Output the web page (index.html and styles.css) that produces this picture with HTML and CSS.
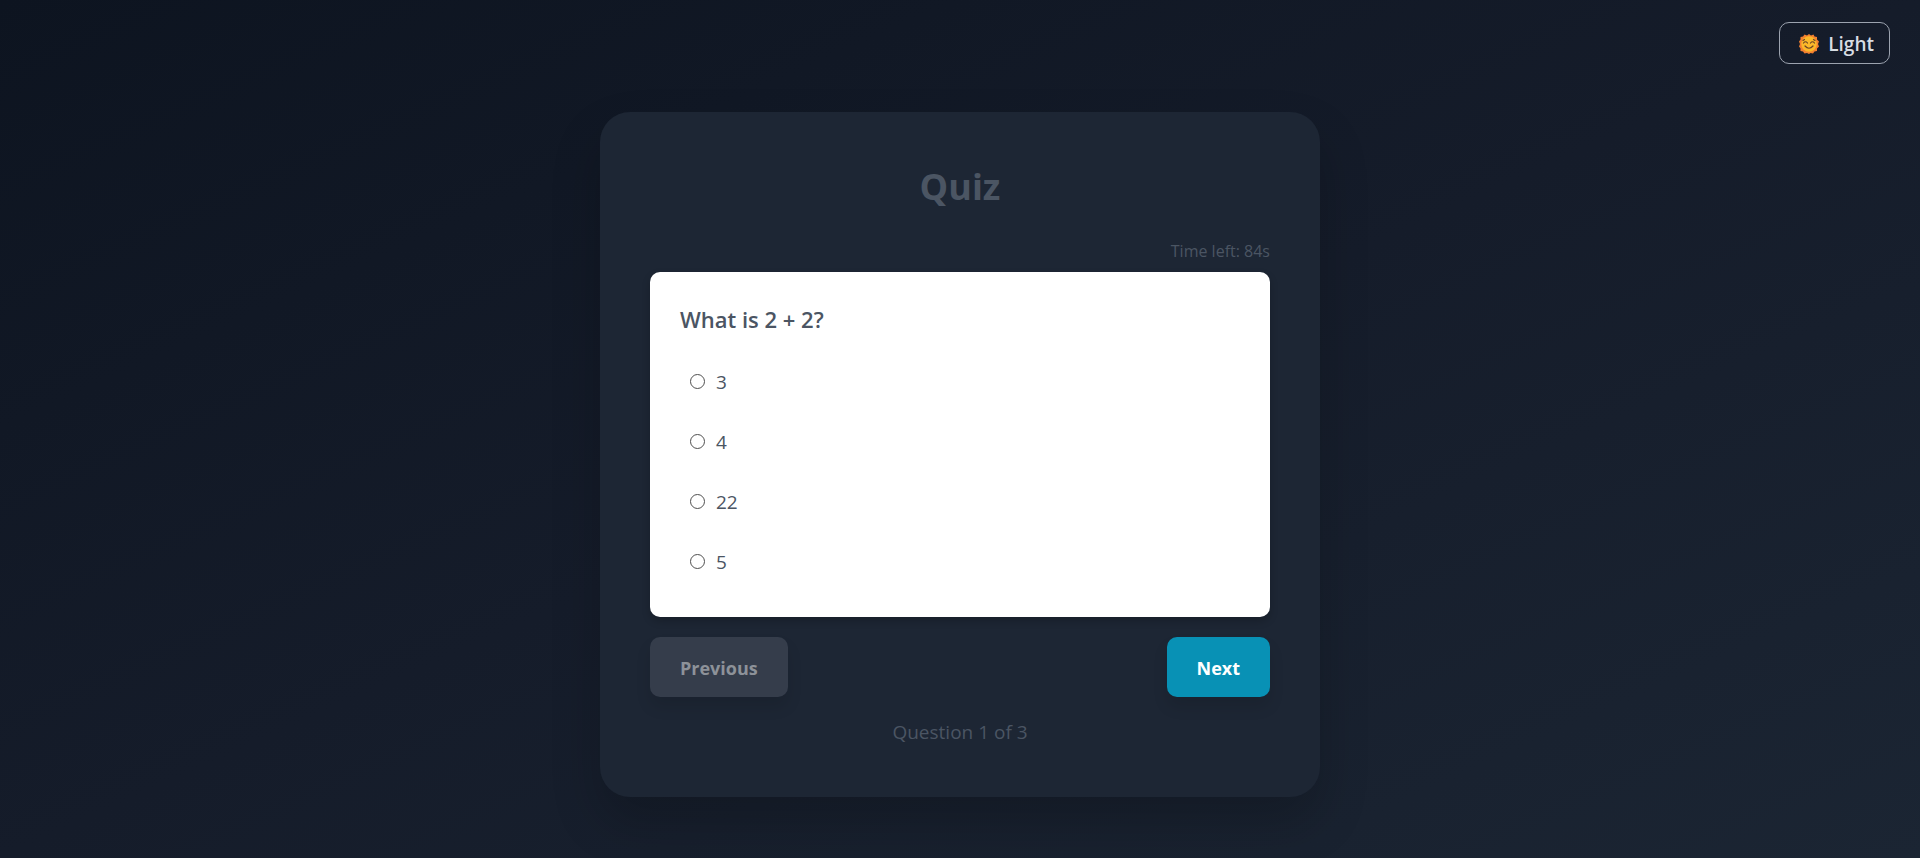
FILE: index.html
```html
<!DOCTYPE html>
<html lang="en">
<head>
<meta charset="utf-8">
<meta name="viewport" content="width=device-width, initial-scale=1">
<title>Quiz</title>
<link rel="stylesheet" href="styles.css">
</head>
<body class="page">
<header class="topbar">
  <button class="theme-toggle" type="button">
    <svg class="sun" viewBox="0 0 40 40" aria-hidden="true">
      <path fill="#f4802f" d="M20 0l4 3 5-2 2 4 5 1v5l4 4-2 5 2 5-4 4v5l-5 1-3 4-5-1-3 2-4-2-5 1-3-4-5-1v-5l-3-4 2-5-2-5 3-4V6l5-1 3-4 5 2z"/>
      <circle cx="20" cy="20" r="15.500" fill="#fbb829"/>
      <path fill="none" stroke="#6b4526" stroke-width="2.400" stroke-linecap="round" d="M8 13l3-2M32 13l-3-2M9 18q4-5 8 0M23 18q4-5 8 0M12 24q8 9 16 0"/>
    </svg>
    <span>Light</span>
  </button>
</header>
<main class="card">
  <h1 class="title">Quiz</h1>
  <p class="timer">Time left: 84s</p>
  <form class="quiz">
    <fieldset class="question">
      <legend class="prompt">What is 2 + 2?</legend>
      <label class="option"><input class="radio" type="radio" name="answer" value="3"><span>3</span></label>
      <label class="option"><input class="radio" type="radio" name="answer" value="4"><span>4</span></label>
      <label class="option"><input class="radio" type="radio" name="answer" value="22"><span>22</span></label>
      <label class="option"><input class="radio" type="radio" name="answer" value="5"><span>5</span></label>
    </fieldset>
    <div class="actions">
      <button class="button previous" type="button" disabled>Previous</button>
      <button class="button next" type="button">Next</button>
    </div>
  </form>
  <p class="progress">Question 1 of 3</p>
</main>
</body>
</html>
```
FILE: styles.css
```css
* {
  box-sizing: border-box;
}

.page {
  margin: 0;
  min-height: 100vh;
  padding: 22px 30px 60px;
  background: linear-gradient(to bottom right, #0d1420, #151c2a 50%, #1b2533);
  color: #4b5563;
  font-family: "Segoe UI", "Open Sans", "Noto Sans", sans-serif;
  font-size: 19px;
  line-height: 30px;
}

.topbar {
  display: flex;
  justify-content: flex-end;
  margin-bottom: 48px;
}

.theme-toggle {
  display: flex;
  align-items: center;
  gap: 9px;
  padding: 6px 15px 4px 19px;
  border: 1px solid #9ca3af;
  border-radius: 10px;
  background: transparent;
  color: #d8dde4;
  font: inherit;
  font-weight: 600;
}

.sun {
  width: 20px;
  height: 20px;
}

.card {
  width: 100%;
  max-width: 720px;
  margin: 0 auto;
  padding: 50px;
  border-radius: 30px;
  background: #1d2634;
  box-shadow: 0 25px 50px rgba(0, 0, 0, 0.2);
}

.title {
  margin: 0 0 27px;
  font-size: 36px;
  font-weight: 700;
  line-height: 50px;
  text-align: center;
}

.timer {
  margin: 0 0 8px;
  font-size: 16px;
  line-height: 25px;
  text-align: right;
}

.quiz {
  margin: 0;
}

.question {
  min-width: 0;
  margin: 0;
  padding: 30px;
  border: 0;
  border-radius: 10px;
  background: #fff;
  box-shadow: 0 4px 8px rgba(0, 0, 0, 0.2);
}

.prompt {
  float: left;
  width: 100%;
  margin-bottom: 20px;
  padding: 0;
  font-size: 22px;
  font-weight: 600;
  line-height: 35px;
}

.option {
  display: flex;
  clear: both;
  align-items: center;
  gap: 11px;
  margin-bottom: 10px;
  padding: 10px;
}

.option:last-child {
  margin-bottom: 0;
}

.radio {
  appearance: none;
  width: 15px;
  height: 15px;
  margin: 0 0 2px;
  border: 1px solid #4f4f4f;
  border-radius: 50%;
}

.radio:checked {
  border: 4px solid #0891b5;
}

.actions {
  display: flex;
  justify-content: space-between;
  margin-top: 20px;
}

.button {
  padding: 16px 30px 14px;
  border: 0;
  border-radius: 10px;
  color: #fff;
  font: inherit;
  font-size: 18px;
  font-weight: 700;
  line-height: 30px;
  box-shadow: 0 10px 15px rgba(0, 0, 0, 0.1);
}

.previous {
  background: #353d4b;
  color: #8d9299;
}

.next {
  background: #0891b5;
}

.progress {
  margin: 20px 0 0;
  text-align: center;
}
```
